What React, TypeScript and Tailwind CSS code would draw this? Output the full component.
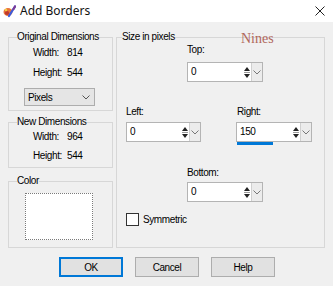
import React from 'react';

const ui = "font-['Liberation_Sans',Arial,sans-serif] text-[10px] tracking-[-0.4px] text-black";

function Spin({ value, w }: { value: string; w: string }) {
  return (
    <div className={`${w} h-[20px] flex border border-[#b4b4b4] bg-white`}>
      <span className="flex-1 pl-[3px] leading-[18px]">{value}</span>
      <div className="w-[8px] flex flex-col items-center justify-center gap-[1px]">
        <svg width="6" height="4" viewBox="0 0 6 4"><path d="M3 0 L6 4 L0 4 Z" fill="#222" /></svg>
        <div className="w-[6px] h-px bg-[#999]" />
        <svg width="6" height="4" viewBox="0 0 6 4"><path d="M0 0 L6 0 L3 4 Z" fill="#222" /></svg>
      </div>
      <div className="w-[11px] flex items-center justify-center bg-[#ececec] border-l border-[#d0d0d0]">
        <svg width="8" height="5" viewBox="0 0 8 5"><path d="M0.5 0.5 L4 4 L7.5 0.5" fill="none" stroke="#777" strokeWidth="1" /></svg>
      </div>
    </div>
  );
}

function Row({ label, value }: { label: string; value: string }) {
  return (
    <div className="ml-[24px] flex h-[14px] leading-[14px]">
      <span className="w-[34px]">{label}</span>
      <span>{value}</span>
    </div>
  );
}

function Btn({ children, focus }: { children: React.ReactNode; focus?: boolean }) {
  return (
    <div
      className={`w-[64px] h-[20px] flex items-center justify-center bg-[#e1e1e1] ${
        focus ? 'border-2 border-[#0078d7]' : 'border border-[#adadad]'
      }`}
    >
      {children}
    </div>
  );
}

export default function App() {
  return (
    <div className={`w-[333px] h-[286px] bg-[#f0f0f0] overflow-hidden ${ui}`}>
      {/* title bar */}
      <div className="h-[22px] bg-white flex items-center">
        <svg className="ml-[3px]" width="13" height="13" viewBox="0 0 13 13">
          <ellipse cx="5" cy="7" rx="4.5" ry="4" fill="#e8743b" />
          <ellipse cx="4" cy="8" rx="2.2" ry="2" fill="#c0392b" />
          <circle cx="3" cy="5" r="1.2" fill="#f4d03f" />
          <path d="M6 11 L12 1.5" stroke="#3b5bdb" strokeWidth="2.2" strokeLinecap="round" />
          <path d="M10.5 4 L12 1.5" stroke="#7d3c98" strokeWidth="2.2" strokeLinecap="round" />
        </svg>
        <span className="ml-[4px] font-['Noto_Sans',sans-serif] text-[12px] tracking-normal text-[#111]">Add Borders</span>
        <svg className="ml-auto mr-[8px]" width="10" height="10" viewBox="0 0 10 10">
          <path d="M0.5 0.5 L9.5 9.5 M9.5 0.5 L0.5 9.5" stroke="#222" strokeWidth="1" />
        </svg>
      </div>

      <div className="flex pt-[9px] pl-[8px]">
        {/* left column */}
        <div className="w-[105px] flex flex-col">
          <fieldset className="border border-[#d7d7d7] pb-[4px]">
            <legend className="ml-[8px] h-[12px] leading-[12px] whitespace-nowrap">Original Dimensions</legend>
            <div className="mt-[3px]">
              <Row label="Width:" value="814" />
            </div>
            <div className="mt-[6px]">
              <Row label="Height:" value="544" />
            </div>
            <div className="mt-[8px] ml-[15px] w-[71px] h-[18px] flex items-center border border-[#adadad] bg-[#e5e5e5]">
              <span className="pl-[3px] flex-1">Pixels</span>
              <svg className="mr-[4px]" width="8" height="5" viewBox="0 0 8 5"><path d="M0.5 0.5 L4 4 L7.5 0.5" fill="none" stroke="#555" strokeWidth="1" /></svg>
            </div>
          </fieldset>

          <fieldset className="mt-[5px] border border-[#d7d7d7] pb-[4px]">
            <legend className="ml-[8px] h-[12px] leading-[12px] whitespace-nowrap">New Dimensions</legend>
            <div className="mt-[2px]">
              <Row label="Width:" value="964" />
            </div>
            <div className="mt-[5px]">
              <Row label="Height:" value="544" />
            </div>
          </fieldset>

          <fieldset className="mt-[7px] border border-[#d7d7d7] pb-[7px]">
            <legend className="ml-[8px] h-[12px] leading-[12px]">Color</legend>
            <div className="mt-[6px] ml-[16px] w-[68px] h-[47px] bg-white border border-dotted border-[#7a7a7a]" />
          </fieldset>
        </div>

        {/* right column */}
        <fieldset className="relative ml-[3px] w-[209px] h-[217px] border border-[#d7d7d7]">
          <legend className="ml-[5px] h-[12px] leading-[12px] whitespace-nowrap">Size in pixels</legend>
          <span className="absolute left-[124px] -top-[12px] font-['Liberation_Serif',serif] text-[14px] tracking-normal text-[#b0675c] leading-[16px]">
            Nines
          </span>
          <div className="flex flex-col">
            <div className="mt-[1px] ml-[70px] h-[12px] leading-[12px]">Top:</div>
            <div className="mt-[6px] ml-[70px]">
              <Spin value="0" w="w-[76px]" />
            </div>
            <div className="mt-[24px] flex">
              <div className="ml-[9px] flex flex-col">
                <div className="h-[12px] leading-[12px]">Left:</div>
                <div className="mt-[4px]">
                  <Spin value="0" w="w-[75px]" />
                </div>
              </div>
              <div className="ml-[35px] flex flex-col">
                <div className="h-[12px] leading-[12px] ml-[1px]">Right:</div>
                <div className="mt-[4px]">
                  <Spin value="150" w="w-[76px]" />
                </div>
                <div className="ml-[1px] w-[36px] h-[3px] bg-[#0078d7]" />
              </div>
            </div>
            <div className="mt-[22px] ml-[70px] h-[12px] leading-[12px]">Bottom:</div>
            <div className="mt-[3px] ml-[70px]">
              <Spin value="0" w="w-[76px]" />
            </div>
            <div className="mt-[10px] ml-[9px] flex items-center">
              <div className="w-[13px] h-[13px] border border-[#333] bg-white" />
              <span className="ml-[4px]">Symmetric</span>
            </div>
          </div>
        </fieldset>
      </div>

      {/* buttons */}
      <div className="mt-[9px] ml-[59px] flex gap-[12px]">
        <Btn focus>OK</Btn>
        <Btn>Cancel</Btn>
        <Btn>Help</Btn>
      </div>
    </div>
  );
}
